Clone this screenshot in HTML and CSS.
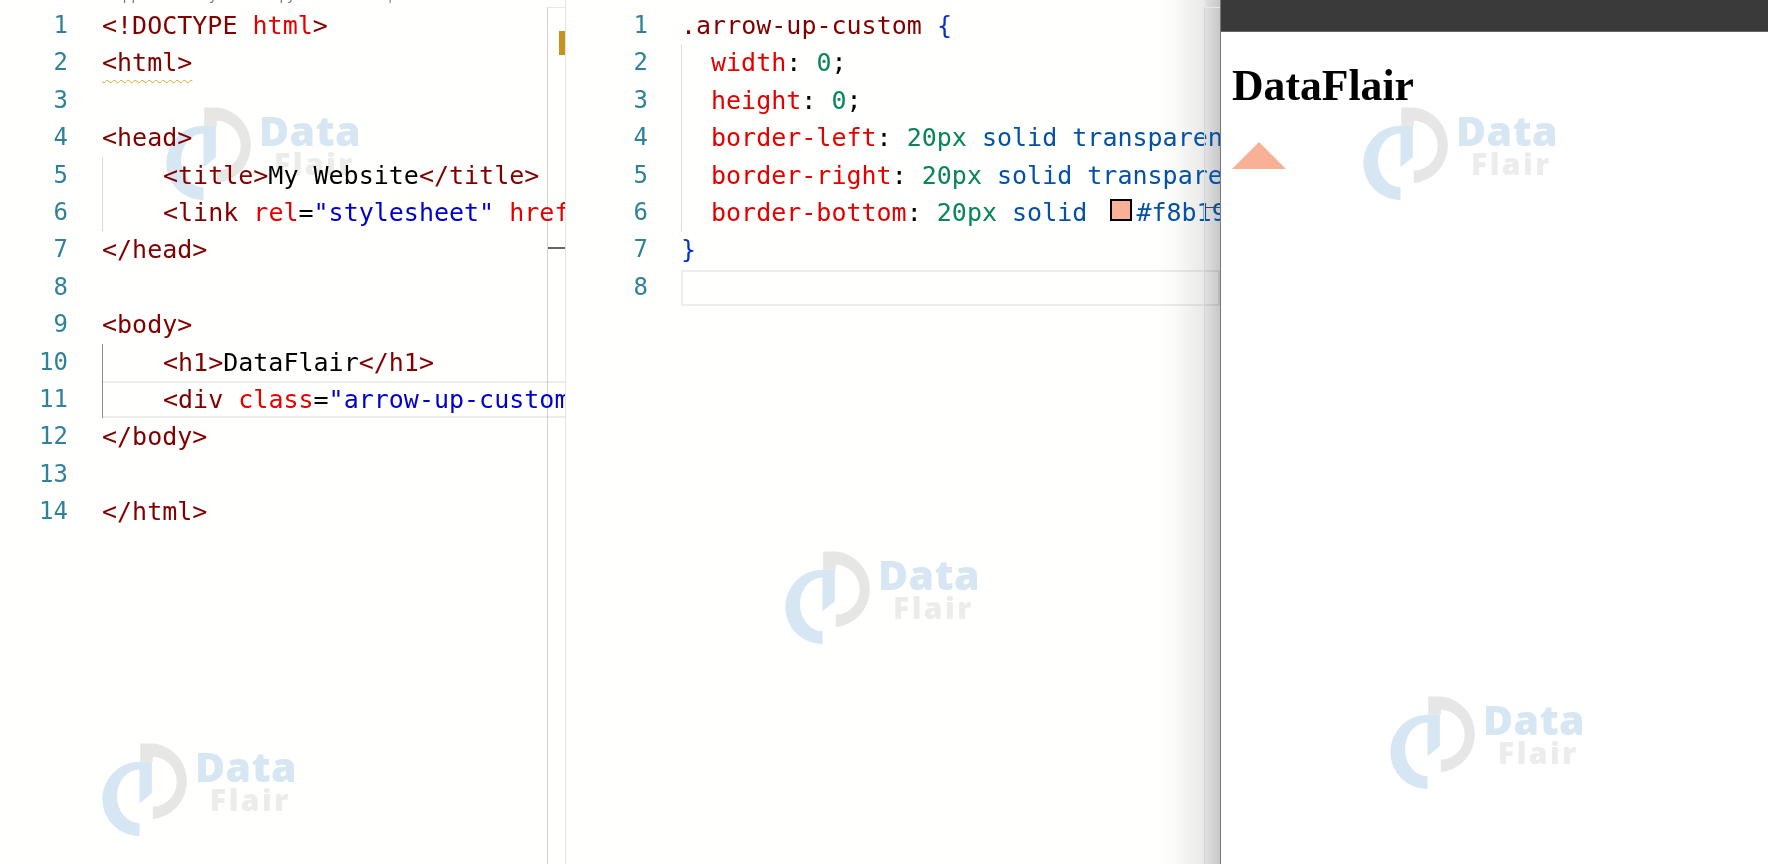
FILE: index.html
```html
<!DOCTYPE html>
<html lang="en">
<head>
<meta charset="utf-8">
<title>DataFlair arrow example</title>
<link rel="stylesheet" href="styles.css">
</head>
<body>
<main class="screen">
  <section class="pane pane-html">
    <div class="crumbs"><span>app</span><span>my</span><span>/</span><span>py</span><span>|</span></div>
    <div class="editor">
      <ol class="gutter"><li>1</li><li>2</li><li>3</li><li>4</li><li>5</li><li>6</li><li>7</li><li>8</li><li>9</li><li>10</li><li>11</li><li>12</li><li>13</li><li>14</li></ol>
      <div class="code">
        <div class="line"><span class="tag">&lt;!DOCTYPE</span> <span class="attr">html</span><span class="tag">&gt;</span></div>
        <div class="line"><span class="tag squiggle">&lt;html&gt;</span></div>
        <div class="line"></div>
        <div class="line"><span class="tag">&lt;head&gt;</span></div>
        <div class="block guide">
          <div class="line"><span class="tag">&lt;title&gt;</span>My Website<span class="tag">&lt;/title&gt;</span></div>
          <div class="line"><span class="tag">&lt;link</span> <span class="attr">rel</span>=<span class="str">"stylesheet"</span> <span class="attr">href</span>=<span class="str">"styles.css"</span><span class="tag">&gt;</span></div>
        </div>
        <div class="line"><span class="tag">&lt;/head&gt;</span></div>
        <div class="line"></div>
        <div class="line"><span class="tag">&lt;body&gt;</span></div>
        <div class="block guide guide-active">
          <div class="line"><span class="tag">&lt;h1&gt;</span>DataFlair<span class="tag">&lt;/h1&gt;</span></div>
          <div class="line current"><span class="tag">&lt;div</span> <span class="attr">class</span>=<span class="str">"arrow-up-custom"</span><span class="tag">&gt;&lt;/div&gt;</span></div>
        </div>
        <div class="line"><span class="tag">&lt;/body&gt;</span></div>
        <div class="line"></div>
        <div class="line"><span class="tag">&lt;/html&gt;</span></div>
      </div>
      <div class="ruler ruler-html"><i class="mark-warn"></i><i class="mark-pos"></i></div>
    </div>
  </section>

  <section class="pane pane-css">
    <div class="editor">
      <ol class="gutter"><li>1</li><li>2</li><li>3</li><li>4</li><li>5</li><li>6</li><li>7</li><li>8</li></ol>
      <div class="code">
        <div class="line"><span class="tag">.arrow-up-custom</span> <span class="brace">{</span></div>
        <div class="block guide-css">
          <div class="line"><span class="attr">width</span>: <span class="num">0</span>;</div>
          <div class="line"><span class="attr">height</span>: <span class="num">0</span>;</div>
          <div class="line"><span class="attr">border-left</span>: <span class="num">20px</span> <span class="val">solid transparent</span>;</div>
          <div class="line"><span class="attr">border-right</span>: <span class="num">20px</span> <span class="val">solid transparent</span>;</div>
          <div class="line"><span class="attr">border-bottom</span>: <span class="num">20px</span> <span class="val">solid</span> <i class="swatch"></i><span class="val">#f8b195</span>;</div>
        </div>
        <div class="line"><span class="brace">}</span></div>
        <div class="line current current-css"></div>
      </div>
      <div class="shadow"></div>
      <div class="ruler ruler-css"><i class="mark-pos"></i></div>
    </div>
  </section>

  <section class="preview">
    <div class="titlebar"></div>
    <div class="page">
      <h1 class="page-title">DataFlair</h1>
      <div class="arrow-up-custom"></div>
    </div>
  </section>
</main>

<div class="wm wm-1"><svg class="wm-logo" viewBox="60 64 274 288" aria-hidden="true"><path class="logo-grey" d="M178 68H218A112 114 0 0 1 216 295V258A72 75 0 0 0 216 108V123H178Z"/><path class="logo-blue" d="M176 347A112 112 0 0 1 176 123H213V218L176 248V146A68 81 0 0 0 176 308Z"/></svg><div class="wm-text"><b class="wm-data">Data</b><b class="wm-flair">Flair</b></div></div>
<div class="wm wm-2"><svg class="wm-logo" viewBox="60 64 274 288" aria-hidden="true"><path class="logo-grey" d="M178 68H218A112 114 0 0 1 216 295V258A72 75 0 0 0 216 108V123H178Z"/><path class="logo-blue" d="M176 347A112 112 0 0 1 176 123H213V218L176 248V146A68 81 0 0 0 176 308Z"/></svg><div class="wm-text"><b class="wm-data">Data</b><b class="wm-flair">Flair</b></div></div>
<div class="wm wm-3"><svg class="wm-logo" viewBox="60 64 274 288" aria-hidden="true"><path class="logo-grey" d="M178 68H218A112 114 0 0 1 216 295V258A72 75 0 0 0 216 108V123H178Z"/><path class="logo-blue" d="M176 347A112 112 0 0 1 176 123H213V218L176 248V146A68 81 0 0 0 176 308Z"/></svg><div class="wm-text"><b class="wm-data">Data</b><b class="wm-flair">Flair</b></div></div>
<div class="wm wm-4"><svg class="wm-logo" viewBox="60 64 274 288" aria-hidden="true"><path class="logo-grey" d="M178 68H218A112 114 0 0 1 216 295V258A72 75 0 0 0 216 108V123H178Z"/><path class="logo-blue" d="M176 347A112 112 0 0 1 176 123H213V218L176 248V146A68 81 0 0 0 176 308Z"/></svg><div class="wm-text"><b class="wm-data">Data</b><b class="wm-flair">Flair</b></div></div>
<div class="wm wm-5"><svg class="wm-logo" viewBox="60 64 274 288" aria-hidden="true"><path class="logo-grey" d="M178 68H218A112 114 0 0 1 216 295V258A72 75 0 0 0 216 108V123H178Z"/><path class="logo-blue" d="M176 347A112 112 0 0 1 176 123H213V218L176 248V146A68 81 0 0 0 176 308Z"/></svg><div class="wm-text"><b class="wm-data">Data</b><b class="wm-flair">Flair</b></div></div>
</body>
</html>
```
FILE: styles.css
```css
* { box-sizing: border-box; }
html, body { margin: 0; height: 100%; overflow: hidden; background: #fff; }

.screen {
  display: flex;
  width: 1768px;
  height: 864px;
  overflow: hidden;
  background: #fffffe;
}

.pane {
  position: relative;
  height: 100%;
  overflow: hidden;
  flex: none;
}
.pane-html { width: 565px; }
.pane-css { width: 655px; border-left: 1px solid #e4e4e4; }

.crumbs {
  position: absolute;
  top: -14px;
  left: 102px;
  display: grid;
  grid-template-columns: 38px 77px 45px 33px 99px;
  font: 14px/16px "Noto Sans", sans-serif;
  color: #777;
}
.crumbs span { text-align: right; }

.editor {
  display: flex;
  height: 100%;
  padding-top: 7px;
  font-family: "DejaVu Sans Mono", monospace;
  font-size: 25px;
  line-height: 37.4px;
  color: #000;
}

.gutter {
  flex: none;
  margin: 0;
  padding: 0;
  list-style: none;
  text-align: right;
  color: #2f8299;
  font-size: 24px;
}
.pane-html .gutter { width: 68px; margin-right: 34px; }
.pane-css .gutter { width: 82px; margin-right: 33px; }

.code { position: relative; z-index: 1; flex: 1; min-width: 0; }
.line { height: 37.4px; white-space: pre; }

.block { position: relative; }
.guide { padding-left: 60px; border-left: 1px solid #d9d9d9; }
.guide-active { border-left-color: #8e8e8e; }
.guide-css { padding-left: 29px; border-left: 1px solid #dcdcdc; }

.current { box-shadow: inset 0 2px 0 rgba(0, 0, 0, 0.07), inset 0 -2px 0 rgba(0, 0, 0, 0.07); margin-left: -60px; padding-left: 60px; }
.current-css { margin-left: 0; padding-left: 0; height: 36px; margin-top: 1px; box-shadow: inset 0 0 0 2px rgba(0, 0, 0, 0.07); }

.tag { color: #800000; }
.attr { color: #e50000; }
.str { color: #0000cd; }
.num { color: #098658; }
.val { color: #0451a5; }
.brace { color: #0431c8; }

.squiggle {
  text-decoration: underline wavy #d3a72f 1px;
  text-underline-offset: 8px;
}

.swatch {
  display: inline-block;
  width: 22px;
  height: 22px;
  margin: 0 4px 0 8px;
  vertical-align: 0;
  background: #f8b195;
  border: 2px solid #000;
}

.ruler {
  position: absolute;
  top: 7px;
  bottom: 0;
  border-left: 1px solid #d4d4d4;
  border-top: 1px solid #e8e8e8;
}
.ruler-html { left: 547px; width: 18px; }
.ruler-css { left: 638px; width: 16px; z-index: 2; }

.mark-warn {
  position: absolute;
  top: 23px;
  right: 0;
  width: 6px;
  height: 24px;
  background: #c8931d;
}
.mark-pos {
  position: absolute;
  top: 239px;
  left: 0;
  right: 0;
  height: 2px;
  background: #666;
}
.ruler-css .mark-pos { top: 199px; height: 1px; background: #444; }

.shadow {
  position: absolute;
  top: 0;
  right: 0;
  bottom: 0;
  width: 64px;
  pointer-events: none;
  background: linear-gradient(to right, rgba(190, 190, 190, 0), rgba(190, 190, 190, 0.08) 30%, rgba(190, 190, 190, 0.35) 77%, rgba(190, 190, 190, 0.48) 77%, rgba(190, 190, 190, 0.85));
}

.preview {
  flex: 1;
  min-width: 0;
  border-left: 1px solid #777;
  background: #fff;
}
.titlebar { height: 32px; background: #3a3a3a; border-bottom: 1px solid #666; }
.page { padding: 28px 0 0 11px; }
.page-title {
  margin: 0;
  font: bold 43.7px/50px "Liberation Serif", serif;
  color: #000;
}
.arrow-up-custom {
  width: 0;
  height: 0;
  margin-top: 32px;
  border-left: 27px solid transparent;
  border-right: 27px solid transparent;
  border-bottom: 27px solid #f8b195;
}

.wm {
  position: absolute;
  display: flex;
  gap: 3px;
  pointer-events: none;
  mix-blend-mode: multiply;
}
.wm-1 { left: 165px; top: 106px; }
.wm-2 { left: 101px; top: 742px; }
.wm-3 { left: 784px; top: 550px; }
.wm-4 { left: 1362px; top: 106px; }
.wm-5 { left: 1389px; top: 695px; }

.wm-logo { width: 91px; height: 96px; flex: none; }
.logo-grey { fill: #e6e6e6; }
.logo-blue { fill: #d6e6f3; }

.wm-text {
  display: flex;
  flex-direction: column;
  font-family: "Open Sans", sans-serif;
  font-weight: 700;
}
.wm-data {
  font-size: 41px;
  line-height: 36px;
  margin-top: 6px;
  letter-spacing: 0.5px;
  color: #d6e6f3;
}
.wm-flair {
  font-size: 30px;
  line-height: 26px;
  margin-top: 3px;
  margin-left: 15px;
  letter-spacing: 2.5px;
  color: #ececec;
}
```
